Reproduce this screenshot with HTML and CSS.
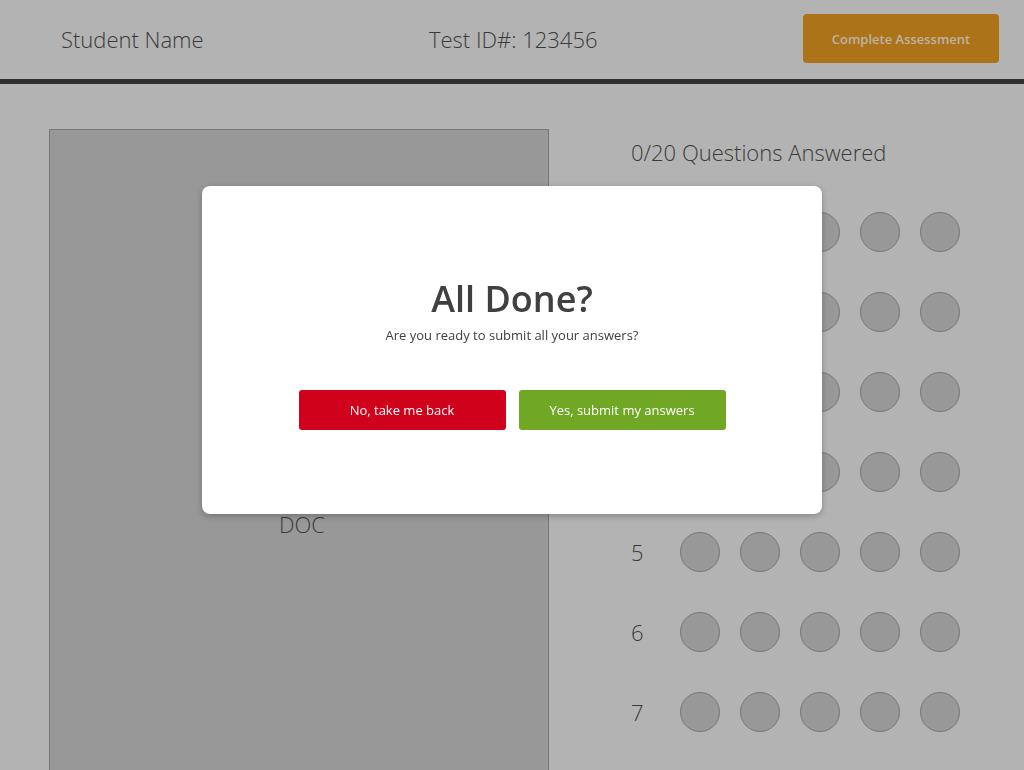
FILE: index.html
```html
<!DOCTYPE html>
<html lang="en">
<head>
    <meta charset="UTF-8">
    <meta name="viewport" content="width=device-width, initial-scale=1.0">
    <title>Assessment</title>
    <link rel="stylesheet" href="styles.css">
</head>
<body>
    <header class="topbar">
        <div class="student">Student Name</div>
        <div class="test-id">Test ID#: 123456</div>
        <button class="complete-btn">Complete Assessment</button>
    </header>

    <main class="content">
        <section class="doc">
            <span class="doc-label">DOC</span>
        </section>
        <section class="answers">
            <h2 class="answers-title">0/20 Questions Answered</h2>
            <div class="question"><span class="num">1</span><span class="dot"></span><span class="dot"></span><span class="dot"></span><span class="dot"></span><span class="dot"></span></div>
            <div class="question"><span class="num">2</span><span class="dot"></span><span class="dot"></span><span class="dot"></span><span class="dot"></span><span class="dot"></span></div>
            <div class="question"><span class="num">3</span><span class="dot"></span><span class="dot"></span><span class="dot"></span><span class="dot"></span><span class="dot"></span></div>
            <div class="question"><span class="num">4</span><span class="dot"></span><span class="dot"></span><span class="dot"></span><span class="dot"></span><span class="dot"></span></div>
            <div class="question"><span class="num">5</span><span class="dot"></span><span class="dot"></span><span class="dot"></span><span class="dot"></span><span class="dot"></span></div>
            <div class="question"><span class="num">6</span><span class="dot"></span><span class="dot"></span><span class="dot"></span><span class="dot"></span><span class="dot"></span></div>
            <div class="question"><span class="num">7</span><span class="dot"></span><span class="dot"></span><span class="dot"></span><span class="dot"></span><span class="dot"></span></div>
        </section>
    </main>

    <div class="modal">
        <h1 class="modal-title">All Done?</h1>
        <p class="modal-text">Are you ready to submit all your answers?</p>
        <div class="modal-actions">
            <button class="btn btn-back">No, take me back</button>
            <button class="btn btn-submit">Yes, submit my answers</button>
        </div>
    </div>
</body>
</html>
```

FILE: styles.css
```css
body {
    margin: 0;
    background: #b3b3b3;
    font-family: "Open Sans", "Liberation Sans", sans-serif;
    color: #3a3a3a;
    height: 770px;
    overflow: hidden;
}
.topbar {
    height: 79px;
    border-bottom: 5px solid #2f2f2f;
    display: grid;
    grid-template-columns: 368px 374px 196px;
    align-items: center;
    padding-left: 61px;
}
.student,
.test-id {
    font-size: 22px;
    font-weight: 300;
    color: #3a3a3a;
    margin-top: -2px;
}
.complete-btn {
    height: 49px;
    margin-top: -2px;
    border: none;
    border-radius: 4px;
    background: #ad7318;
    color: #bcb3a6;
    font-family: inherit;
    font-size: 13px;
    font-weight: 600;
}
.content {
    display: flex;
    padding: 45px 0 0 49px;
    gap: 82px;
}
.doc {
    width: 500px;
    height: 790px;
    flex-shrink: 0;
    background: #989898;
    border: 1px solid #777;
    display: flex;
    justify-content: center;
    padding: 379px 0 0 6px;
    box-sizing: border-box;
}
.doc-label {
    font-size: 22px;
    font-weight: 300;
    line-height: 30px;
}
.answers-title {
    margin: 8px 0 25px;
    font-size: 22px;
    font-weight: 300;
    line-height: 30px;
}
.question {
    height: 80px;
    display: flex;
    align-items: center;
    gap: 20px;
}
.num {
    width: 29px;
    font-size: 22px;
    font-weight: 300;
}
.dot {
    width: 38px;
    height: 38px;
    border-radius: 50%;
    background: #989898;
    border: 1px solid #777;
}
.modal {
    position: fixed;
    left: 202px;
    top: 186px;
    width: 620px;
    height: 328px;
    box-sizing: border-box;
    background: #fff;
    border-radius: 8px;
    box-shadow: 0 2px 6px rgba(0, 0, 0, 0.25);
    display: flex;
    flex-direction: column;
    align-items: center;
    padding-top: 88px;
}
.modal-title {
    margin: 0;
    font-size: 36px;
    font-weight: 600;
    line-height: 50px;
    color: #404040;
}
.modal-text {
    margin: 2px 0 0;
    font-size: 13px;
    line-height: 18px;
    color: #404040;
}
.modal-actions {
    display: flex;
    gap: 13px;
    margin-top: 46px;
}
.btn {
    width: 207px;
    height: 40px;
    border: none;
    border-radius: 3px;
    color: #fff;
    font-family: inherit;
    font-size: 13px;
}
.btn-back {
    background: #d0021b;
}
.btn-submit {
    background: #70a724;
}
```
